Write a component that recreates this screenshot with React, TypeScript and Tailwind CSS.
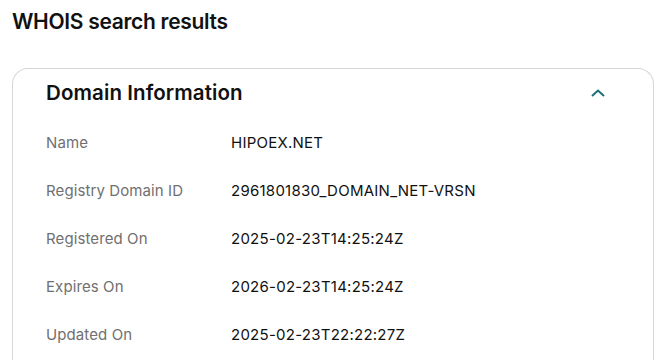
import React from "react";

const rows: [string, string][] = [
  ["Name", "HIPOEX.NET"],
  ["Registry Domain ID", "2961801830_DOMAIN_NET-VRSN"],
  ["Registered On", "2025-02-23T14:25:24Z"],
  ["Expires On", "2026-02-23T14:25:24Z"],
  ["Updated On", "2025-02-23T22:22:27Z"],
];

export default function App() {
  return (
    <div
      className="w-[665px] h-[360px] overflow-hidden bg-white px-3"
      style={{ fontFamily: "Inter, 'Open Sans', sans-serif" }}
    >
      <h1 className="pt-[9px] text-[21px] leading-[26px] font-semibold text-[#111111] tracking-[-0.3px]">
        WHOIS search results
      </h1>
      <div className="mt-[33px] w-[642px] rounded-t-[16px] border border-b-0 border-[#d6d6d6] pl-[33px] pr-[46px] h-[400px]">
        <div className="flex items-center justify-between h-[46px] pt-[2px]">
          <h2 className="text-[20.5px] leading-[24px] font-semibold text-[#111111] tracking-[0.1px]">
            Domain Information
          </h2>
          <svg width="16" height="10" viewBox="0 0 16 10" className="mr-[1px]">
            <path d="M2 8 L8 2.5 L14 8" fill="none" stroke="#1b6f76" strokeWidth="2" />
          </svg>
        </div>
        <div className="mt-[4px] flex flex-col">
          {rows.map(([k, v]) => (
            <div key={k} className="flex items-center h-[48px] text-[15px]">
              <div className="w-[185px] text-[#707070] tracking-[0.1px]">{k}</div>
              <div className="text-[#111111] tracking-[0.25px]">{v}</div>
            </div>
          ))}
        </div>
      </div>
    </div>
  );
}
